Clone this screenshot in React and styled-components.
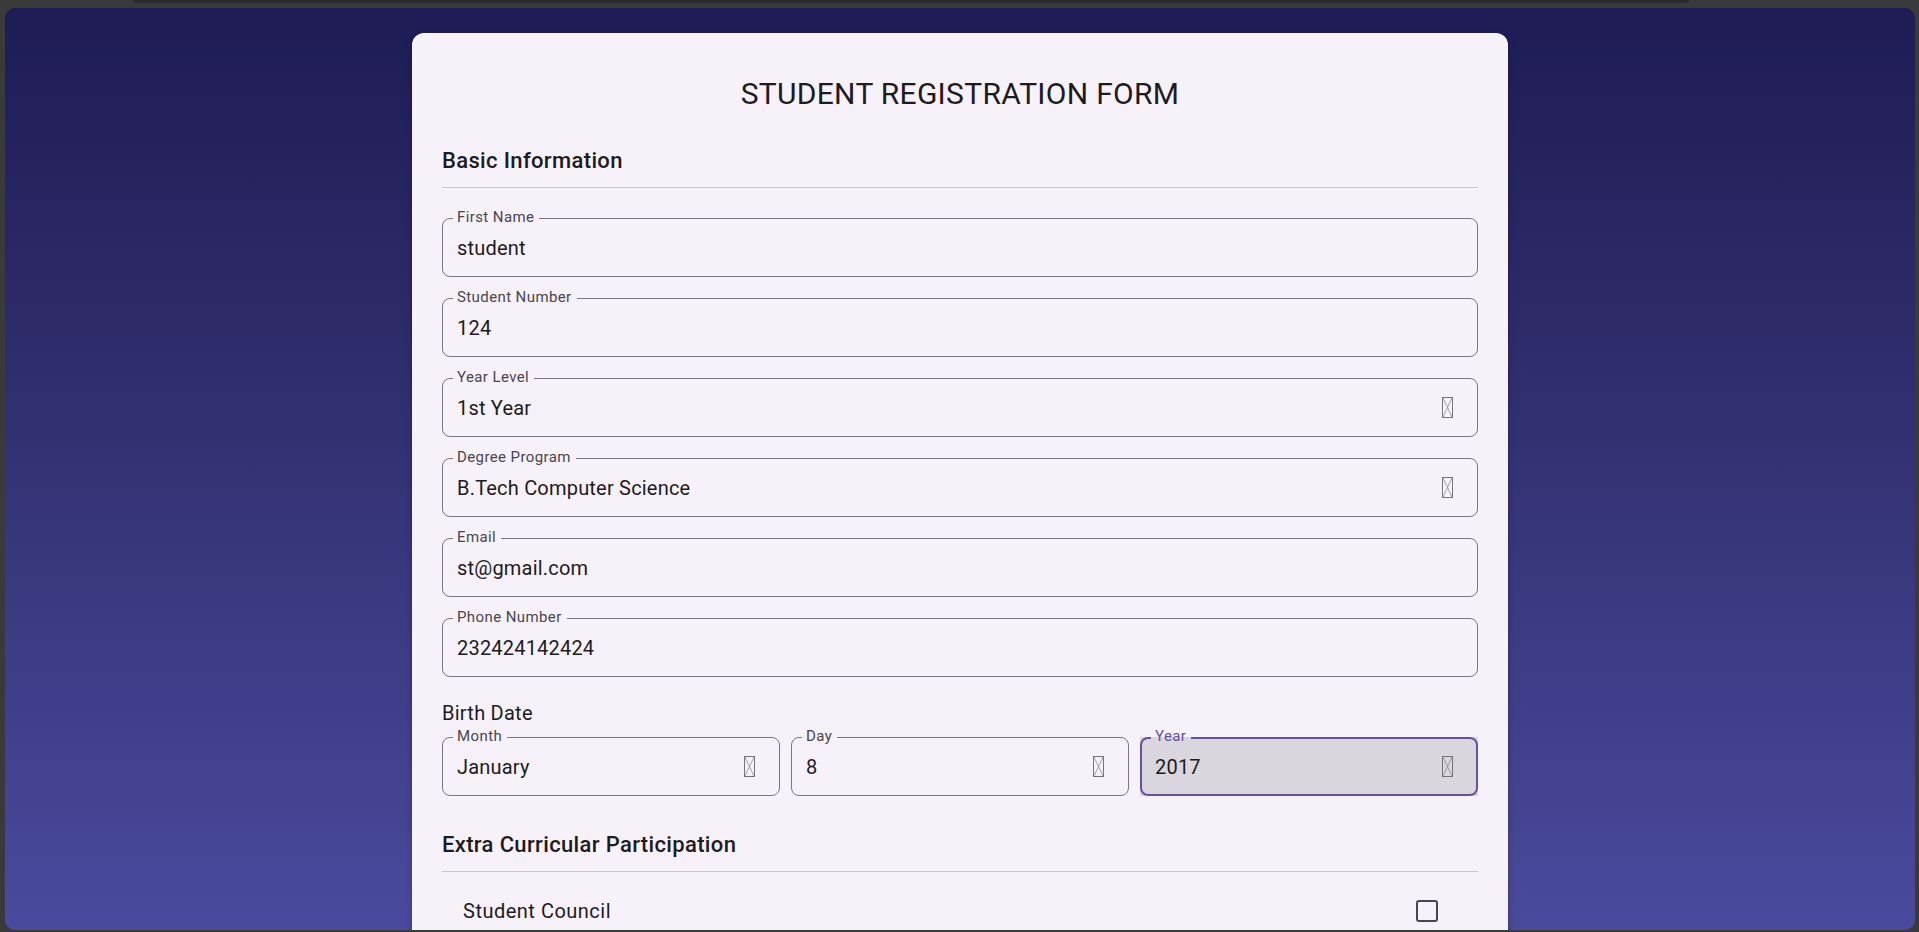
import React from 'react'
import styled, { createGlobalStyle } from 'styled-components'

const GlobalStyle = createGlobalStyle`
  html, body {
    margin: 0;
    padding: 0;
    background: #3a3a3a;
    font-family: Roboto, "Noto Sans", "Liberation Sans", sans-serif;
  }
  body {
    height: 932px;
    overflow: hidden;
  }
`;

const CARD = '#f7f2fa';
const FOCUS_FILL = '#dad6de';

const basicFields = [
  { label: 'First Name', value: 'student' },
  { label: 'Student Number', value: '124' },
  { label: 'Year Level', value: '1st Year', dropdown: true },
  { label: 'Degree Program', value: 'B.Tech Computer Science', dropdown: true },
  { label: 'Email', value: 'st@gmail.com' },
  { label: 'Phone Number', value: '232424142424' },
];

const birthFields = [
  { label: 'Month', value: 'January', dropdown: true },
  { label: 'Day', value: '8', dropdown: true },
  { label: 'Year', value: '2017', dropdown: true, focused: true },
];

const activities = ['Student Council'];

function MissingGlyph() {
  return (
    <svg width="11" height="21" viewBox="0 0 11 21" fill="none">
      <rect x="0.5" y="0.5" width="10" height="20" stroke="#767278" />
      <path d="M1 1 L10 20 M10 1 L1 20" stroke="#8d8991" strokeWidth="0.8" />
    </svg>
  );
}

function Field({ label, value, dropdown, focused }) {
  return (
    <FieldShell $focused={focused}>
      <FieldBox $focused={focused}>
        <FieldValue>{value}</FieldValue>
        {dropdown && (
          <IconSlot>
            <MissingGlyph />
          </IconSlot>
        )}
      </FieldBox>
      <FieldLabel $focused={focused}>{label}</FieldLabel>
    </FieldShell>
  );
}

export default function App() {
  return (
    <>
      <GlobalStyle />
      <Screen>
        <TopStrip />
        <Panel>
          <Card>
            <Title>STUDENT REGISTRATION FORM</Title>

            <SectionTitle>Basic Information</SectionTitle>
            <Divider />
            <FieldStack>
              {basicFields.map((f) => (
                <Field key={f.label} {...f} />
              ))}
            </FieldStack>

            <GroupLabel>Birth Date</GroupLabel>
            <DateRow>
              {birthFields.map((f) => (
                <Field key={f.label} {...f} />
              ))}
            </DateRow>

            <SectionTitle>Extra Curricular Participation</SectionTitle>
            <Divider />
            <CheckList>
              {activities.map((a) => (
                <CheckRow key={a}>
                  <span>{a}</span>
                  <CheckBox />
                </CheckRow>
              ))}
            </CheckList>
          </Card>
        </Panel>
      </Screen>
    </>
  );
}

const Screen = styled.div`
  display: flex;
  flex-direction: column;
  height: 932px;
  overflow: hidden;
`;

const TopStrip = styled.div`
  flex-shrink: 0;
  height: 3px;
  width: 1556px;
  margin-left: 133px;
  background: #2a2a2a;
  border-radius: 0 0 14px 14px;
`;

const Panel = styled.div`
  flex-shrink: 0;
  height: 922px;
  margin: 5px 4px 0 5px;
  padding-top: 25px;
  box-sizing: border-box;
  border-radius: 10px;
  overflow: hidden;
  display: flex;
  justify-content: center;
  align-items: flex-start;
  background: linear-gradient(180deg, #1e1c55 0%, #2e2b69 35%, #4a4a9e 100%);
`;

const Card = styled.div`
  flex-shrink: 0;
  width: 1096px;
  box-sizing: border-box;
  padding: 43px 30px 40px;
  background: ${CARD};
  border-radius: 12px;
  box-shadow: 0 2px 6px rgba(0, 0, 0, 0.25);
  color: #1d1b20;
`;

const Title = styled.h1`
  margin: 0;
  font-size: 30px;
  font-weight: 400;
  line-height: 36px;
  letter-spacing: 0.3px;
  text-align: center;
`;

const SectionTitle = styled.h2`
  margin: 35px 0 12px;
  font-size: 22px;
  font-weight: 500;
  line-height: 28px;
  letter-spacing: 0.35px;
`;

const Divider = styled.hr`
  margin: 0;
  border: 0;
  height: 1px;
  background: #cac4d0;
`;

const FieldStack = styled.div`
  margin-top: 30px;
  display: flex;
  flex-direction: column;
  gap: 21px;
`;

const FieldShell = styled.div`
  position: relative;
  height: 59px;
  background: ${(p) => (p.$focused ? FOCUS_FILL : 'transparent')};
`;

const FieldBox = styled.div`
  height: 100%;
  box-sizing: border-box;
  display: flex;
  align-items: center;
  border: ${(p) => (p.$focused ? '2px solid #6750a4' : '1px solid #79747e')};
  border-radius: 8px;
  padding: 0 ${(p) => (p.$focused ? 13 : 14)}px;
`;

const FieldLabel = styled.span`
  position: absolute;
  top: -10px;
  left: 11px;
  padding: 0 5px 0 4px;
  font-size: 15px;
  line-height: 18px;
  letter-spacing: 0.4px;
  color: ${(p) => (p.$focused ? '#6750a4' : '#49454f')};
  background: linear-gradient(
    180deg,
    ${CARD} 55%,
    ${(p) => (p.$focused ? FOCUS_FILL : CARD)} 55%
  );
`;

const FieldValue = styled.span`
  flex: 1;
  font-size: 20px;
  letter-spacing: 0.2px;
  color: #1d1b20;
`;

const IconSlot = styled.span`
  display: flex;
  margin-right: 10px;
`;

const GroupLabel = styled.div`
  margin-top: 24px;
  font-size: 20px;
  line-height: 24px;
  letter-spacing: 0.25px;
`;

const DateRow = styled.div`
  margin-top: 12px;
  display: grid;
  grid-template-columns: repeat(3, 1fr);
  gap: 11px;
`;

const CheckList = styled.div`
  margin-top: 4px;
`;

const CheckRow = styled.label`
  height: 70px;
  display: flex;
  align-items: center;
  justify-content: space-between;
  padding: 0 40px 0 21px;
  font-size: 20px;
  letter-spacing: 0.5px;
  color: #1d1b20;
`;

const CheckBox = styled.span`
  width: 22px;
  height: 22px;
  box-sizing: border-box;
  border: 2px solid #49454f;
  border-radius: 3px;
`;
